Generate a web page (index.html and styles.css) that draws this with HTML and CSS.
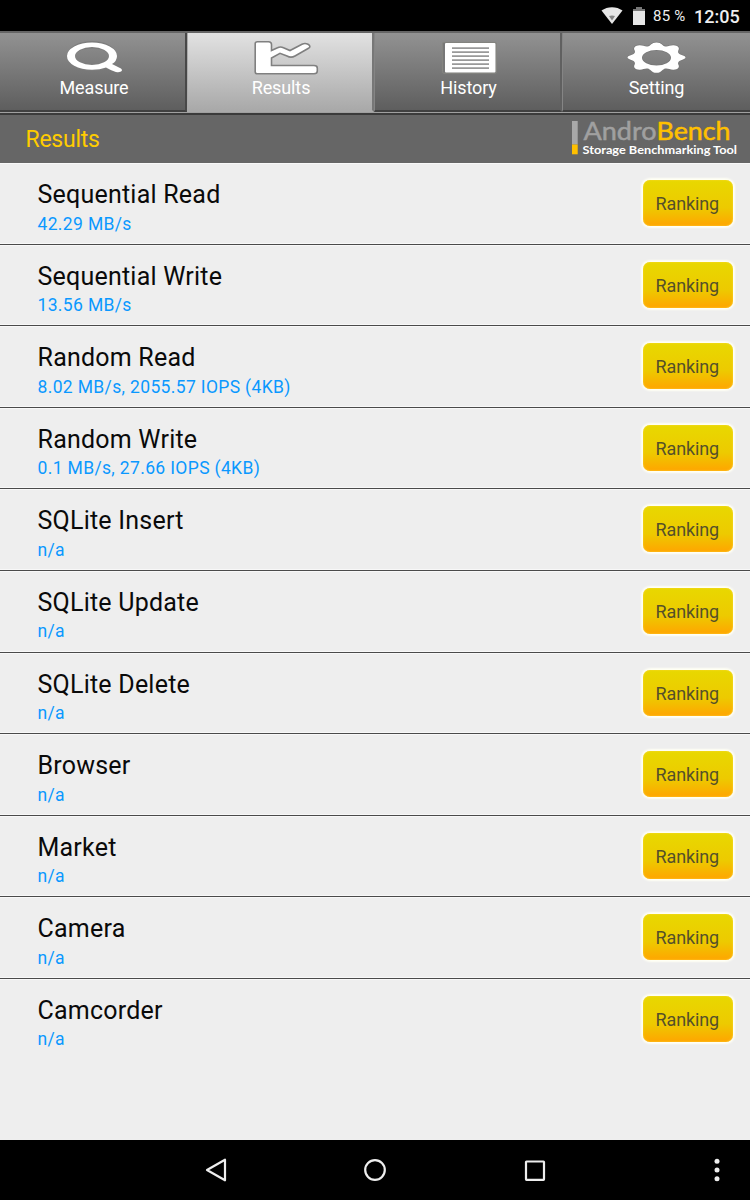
FILE: index.html
```html
<!DOCTYPE html>
<html lang="en">
<head>
<meta charset="utf-8">
<title>AndroBench</title>
<link rel="stylesheet" href="styles.css">
</head>
<body>
<div class="screen">
  <div class="status">
    <svg class="wifi" width="22" height="17" viewBox="0 0 22 17"><path d="M0.5 3.6C6.5-1 15.5-1 21.5 3.6L11 17Z" fill="#e6e6e6"/><path d="M8 9Q11 7.8 14 9L11 13.5Z" fill="#858585"/></svg>
    <svg class="battery" width="12" height="18" viewBox="0 0 12 18"><path d="M0 2H3V0H9V2H12V4H0Z" fill="#777"/><path d="M0 4H12V18H0Z" fill="#e6e6e6"/></svg>
    <span class="percent">85 %</span>
    <span class="clock">12:05</span>
  </div>
  <nav class="tabs">
    <div class="tab first">
      <svg class="icon" width="70" height="36" viewBox="0 0 70 36"><g fill="none" stroke="#7d7d7d" stroke-linecap="round"><ellipse cx="34" cy="18" rx="21" ry="11.3" stroke-width="7.5"/><path d="M50 28L60 32" stroke-width="6"/></g><path fill="#fff" fill-rule="evenodd" d="M9 18A25 13.5 0 0 1 59 18Q59 23 54 26L63 30.5Q66 33.5 60 34.3Q57 34.5 48 29.5Q42 31.7 34 31.7A25 13.5 0 0 1 9 18ZM17 18A17 9 0 0 0 51 18A17 9 0 0 0 17 18Z"/></svg>
      <span class="label">Measure</span>
    </div>
    <div class="tab active">
      <svg class="icon" width="70" height="36" viewBox="0 0 70 36"><path d="M10.2 5.5Q10.2 3.8 12.5 3.8H23.5Q26.5 3.8 26.5 6.5V12.5L32.5 9.8Q35.5 8.2 38.5 9.8L45 12.5L57 6.3Q60 4.8 63 6.3Q66.5 8.3 63.5 10.3L50 18Q46 20.3 42 18L35 15.3L26.5 20V27.5H69Q72.3 27.5 72.3 30V33Q72.3 35.8 69 35.8H12.5Q10.2 35.8 10.2 34Z" fill="#fff" stroke="#808080" stroke-width="1.6"/></svg>
      <span class="label">Results</span>
    </div>
    <div class="tab">
      <svg class="icon" width="70" height="36" viewBox="0 0 70 36"><rect x="9.5" y="4.3" width="54" height="31" rx="1.5" fill="#777" stroke="#858580"/><rect x="12" y="5" width="50.5" height="29.5" rx="1" fill="#fff"/><path d="M19 11H56M19 15H56M19 19H56M19 23H56M19 27H56M19 31H56" transform="translate(0 -.8)" stroke="#999" stroke-width="1.8"/></svg>
      <span class="label">History</span>
    </div>
    <div class="tab last">
      <svg class="icon" width="70" height="36" viewBox="0 0 70 36"><path d="M26.5 8.5C30 8 30 4.5 35.5 4.5C41 4.5 41 8 44.5 8.5C47.500 8.800 49 7.200 52.500 7.300C57 7.500 59 10 57.300 12.500C56.500 14.500 57.500 16 60 16.800C66 18.500 66 20.500 60 22.200C57.500 23 56.500 24.500 57.300 26.500C59 29 57 31.500 52.500 31.700C49 31.800 47.500 30.200 44.500 30.500C41 31 41 34.800 35.500 34.800C30 34.800 30 31 26.500 30.500C23.500 30.200 22 31.800 18.500 31.700C14 31.500 12 29 13.700 26.500C14.500 24.500 13.500 23 11 22.200C5 20.500 5 18.500 11 16.800C13.500 16 14.500 14.500 13.700 12.500C12 10 14 7.500 18.500 7.300C22 7.200 23.500 8.800 26.500 8.500ZM21 19.700A14.500 7.700 0 0 0 50 19.700A14.500 7.700 0 0 0 21 19.700Z" fill="#fff" fill-rule="evenodd" stroke="#777" stroke-width="1.4" paint-order="stroke"/></svg>
      <span class="label">Setting</span>
    </div>
  </nav>
  <header class="titlebar">
    <h1 class="title">Results</h1>
    <svg class="logo" width="168" height="46" viewBox="0 -5 168 46"><path d="M2 3H7.7V26.5H2Z" fill="#a8a8a8"/><path d="M2 26.5H7.7V36.3H2Z" fill="#ffc000"/><text class="brand andro" x="13.5" y="21.7" textLength="73" lengthAdjust="spacingAndGlyphs">Andro</text><text class="brand bench" x="86.5" y="21.7" textLength="74" lengthAdjust="spacingAndGlyphs">Bench</text><text class="tagline" x="12.5" y="35.5" textLength="154.5" lengthAdjust="spacingAndGlyphs" fill="#fff">Storage Benchmarking Tool</text></svg>
  </header>
  <main class="list">
    <div class="row"><div class="info"><div class="name">Sequential Read</div><div class="value">42.29 MB/s</div></div><div class="button">Ranking</div></div>
    <div class="row"><div class="info"><div class="name">Sequential Write</div><div class="value">13.56 MB/s</div></div><div class="button">Ranking</div></div>
    <div class="row"><div class="info"><div class="name">Random Read</div><div class="value">8.02 MB/s, 2055.57 IOPS (4KB)</div></div><div class="button">Ranking</div></div>
    <div class="row"><div class="info"><div class="name">Random Write</div><div class="value">0.1 MB/s, 27.66 IOPS (4KB)</div></div><div class="button">Ranking</div></div>
    <div class="row"><div class="info"><div class="name">SQLite Insert</div><div class="value">n/a</div></div><div class="button">Ranking</div></div>
    <div class="row"><div class="info"><div class="name">SQLite Update</div><div class="value">n/a</div></div><div class="button">Ranking</div></div>
    <div class="row"><div class="info"><div class="name">SQLite Delete</div><div class="value">n/a</div></div><div class="button">Ranking</div></div>
    <div class="row"><div class="info"><div class="name">Browser</div><div class="value">n/a</div></div><div class="button">Ranking</div></div>
    <div class="row"><div class="info"><div class="name">Market</div><div class="value">n/a</div></div><div class="button">Ranking</div></div>
    <div class="row"><div class="info"><div class="name">Camera</div><div class="value">n/a</div></div><div class="button">Ranking</div></div>
    <div class="row"><div class="info"><div class="name">Camcorder</div><div class="value">n/a</div></div><div class="button">Ranking</div></div>
  </main>
  <footer class="navbar">
    <svg width="750" height="60" viewBox="0 0 750 60" fill="none" stroke="#eee" stroke-width="2.2" stroke-linejoin="round"><path d="M207 30L225 19.7V40.3Z"/><circle cx="375" cy="30" r="9.8"/><rect x="526" y="21.5" width="18" height="18.3" rx=".5"/><g fill="#eee" stroke="none"><circle cx="717" cy="21.2" r="2.5"/><circle cx="717" cy="30" r="2.5"/><circle cx="717" cy="38.8" r="2.5"/></g></svg>
  </footer>
</div>
</body>
</html>
```
FILE: styles.css
```css
body {
  margin: 0;
  font-family: Roboto, "Liberation Sans", sans-serif;
  background: #000;
}
.screen {
  width: 750px;
  height: 1200px;
  display: flex;
  flex-direction: column;
  background: #eee;
  overflow: hidden;
}
.status {
  height: 31px;
  flex: none;
  display: flex;
  align-items: center;
  justify-content: flex-end;
  padding-right: 10px;
  box-sizing: border-box;
  background: #000;
  color: #eee;
  white-space: nowrap;
}
.wifi { margin: 0 10px 0 0; }
.battery { margin-right: 8px; }
.percent { font-size: 15px; width: 41px; letter-spacing: .25px; }
.clock { font-size: 18px; font-weight: 500; width: 46px; line-height: 31px; padding-top: 1px; letter-spacing: 0; }
.tabs {
  height: 79px;
  flex: none;
  display: grid;
  grid-template-columns: 187px 187px 188px 188px;
  border-top: 2px solid #656565;
  border-bottom: 1px solid #3b3b3b;
  box-sizing: content-box;
}
.tab {
  display: flex;
  flex-direction: column;
  align-items: center;
  box-sizing: border-box;
  padding-top: 5px;
  color: #fff;
  background: linear-gradient(#929292, #5e5e5e);
  border-right: 2px solid #606060;
  border-left: 1px solid #858585;
  border-bottom: 2px solid #404040;
}
.tab.first { border-left: 0; padding-left: 1px; border-right-color: #484848; }
.tab.active {
  background: linear-gradient(#e2e2e2, #a9a9a9);
  border-right-color: #777;
  border-left-color: #aaa;
  border-bottom-color: #aaa;
}
.tab.last { border-right: 0; padding-right: 1px; }
.icon { display: block; flex: none; overflow: visible; }
.label {
  font-size: 18px;
  line-height: 21px;
  margin-top: 3px;
  padding-left: 2px;
  letter-spacing: -.1px;
}
.tab.last .label { padding-left: 1px; }
.titlebar {
  height: 50px;
  flex: none;
  box-sizing: border-box;
  display: flex;
  justify-content: space-between;
  border-top: 2px solid #3b3b3b;
  box-shadow: 0 -1px 0 #a0a0a0;
  background: #666;
  padding: 0 12px 0 25.5px;
}
.title {
  margin: 0;
  font-weight: 400;
  font-size: 23px;
  line-height: 50px;
  letter-spacing: -.25px;
  color: #fc0;
}
.logo { margin: -2px 0 0; overflow: visible; }
.brand { font-family: Lato, sans-serif; font-size: 25px; }
.andro { fill: #a0a0a0; stroke: #a0a0a0; stroke-width: .5px; }
.bench { fill: #ffc000; stroke: #ffc000; stroke-width: .5px; }
.tagline { font-family: Lato, sans-serif; font-size: 11.5px; font-weight: 700; }
.list { flex: 1; display: flex; flex-direction: column; }
.row {
  height: 81.6px;
  flex: none;
  box-sizing: border-box;
  display: flex;
  justify-content: space-between;
  border-bottom: 1px solid #4a4a4a;
  box-shadow: inset 0 1px #f8f8f8, inset 0 -1px #f8f8f8;
  padding: 17px 17px 0 37.5px;
}
.row:last-child { border-bottom: 0; box-shadow: inset 0 1px #f8f8f8; }
.name {
  font-size: 25px;
  line-height: 29px;
  letter-spacing: .22px;
  color: #0a0a0a;
}
.value {
  font-size: 17.5px;
  line-height: 21px;
  margin-top: 4.5px;
  letter-spacing: .35px;
  color: #0a98ff;
}
.button {
  width: 90px;
  height: 46px;
  box-sizing: border-box;
  border-radius: 7px;
  background: linear-gradient(#e8d800, #edca00 60%, #ffa500);
  box-shadow: 0 0 2px 2px #fffff4, inset 0 0 2px #ffd83c;
  color: #55502a;
  font-size: 18px;
  line-height: 47px;
  letter-spacing: -.15px;
  padding-right: 1.5px;
  text-align: center;
}
.navbar { height: 60px; flex: none; background: #000; }
.navbar svg { display: block; }
```
